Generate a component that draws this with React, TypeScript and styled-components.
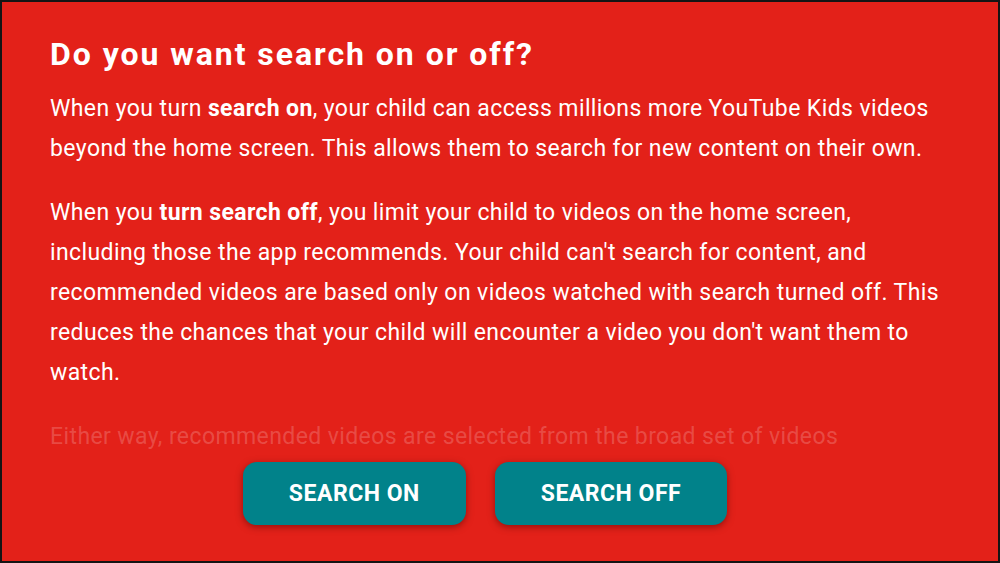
import React from "react";
import styled, { createGlobalStyle } from "styled-components";

const Global = createGlobalStyle`
  html, body { margin: 0; padding: 0; background: #111; }
  * { box-sizing: border-box; }
`;

const Screen = styled.div`
  width: 1000px;
  height: 563px;
  border: 2px solid #141414;
  background: #e32119;
  display: flex;
  flex-direction: column;
  font-family: Roboto, "Liberation Sans", sans-serif;
  color: #ffffff;
  overflow: hidden;
`;

const Scroll = styled.div`
  height: 448px;
  flex: 0 0 auto;
  overflow: hidden;
  padding: 32px 20px 0 48px;
`;

const Heading = styled.h1`
  margin: 0 0 15px 0;
  font-size: 32px;
  line-height: 40px;
  font-weight: 700;
  letter-spacing: 1.95px;
  white-space: nowrap;
`;

const Para = styled.p<{ $faded?: boolean }>`
  margin: 0 0 24px 0;
  font-size: 23px;
  line-height: 40px;
  font-weight: 400;
  letter-spacing: 0.4px;
  white-space: nowrap;
  color: ${(p) => (p.$faded ? "rgba(255,255,255,0.2)" : "#ffffff")};
  b { font-weight: 700; }
`;

const Actions = styled.div`
  display: flex;
  justify-content: center;
  gap: 29px;
  padding: 12px 30px 0 0;
`;

const Button = styled.button`
  height: 63px;
  padding: 0 46px;
  border: none;
  border-radius: 14px;
  background: #01828a;
  color: #ffffff;
  font-family: Roboto, "Liberation Sans", sans-serif;
  font-size: 23px;
  font-weight: 700;
  letter-spacing: 0.5px;
  box-shadow: 0 2px 7px rgba(70, 0, 0, 0.5);
  cursor: pointer;
`;

export default function App() {
  return (
    <>
      <Global />
      <Screen>
        <Scroll>
          <Heading>Do you want search on or off?</Heading>
          <Para>
            When you turn <b>search on</b>, your child can access millions more YouTube Kids videos
            <br />
            beyond the home screen. This allows them to search for new content on their own.
          </Para>
          <Para>
            When you <b>turn search off</b>, you limit your child to videos on the home screen,
            <br />
            including those the app recommends. Your child can't search for content, and
            <br />
            recommended videos are based only on videos watched with search turned off. This
            <br />
            reduces the chances that your child will encounter a video you don't want them to
            <br />
            watch.
          </Para>
          <Para $faded>
            Either way, recommended videos are selected from the broad set of videos
            <br />
            available in YouTube Kids.
          </Para>
        </Scroll>
        <Actions>
          <Button>SEARCH ON</Button>
          <Button>SEARCH OFF</Button>
        </Actions>
      </Screen>
    </>
  );
}
